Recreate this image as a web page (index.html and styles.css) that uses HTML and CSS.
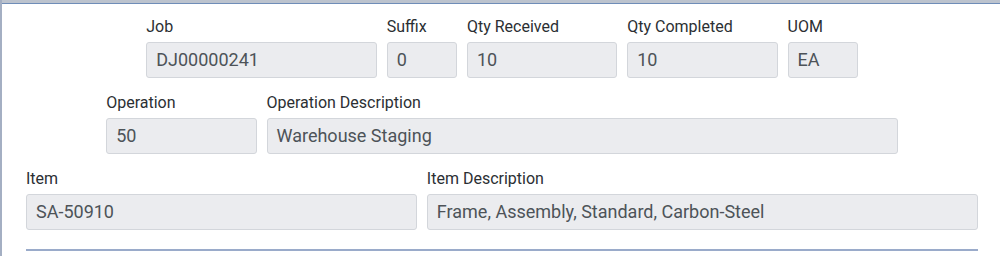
FILE: index.html
```html
<!DOCTYPE html>
<html>
<head>
<meta charset="utf-8">
<link rel="stylesheet" href="styles.css">
</head>
<body>
<div class="frame">
  <div class="frame-top"></div>
  <div class="panel">
    <div class="grid">
      <div class="field start-4 span-6"><label class="lbl">Job</label><div class="inp">DJ00000241</div></div>
      <div class="field span-2"><label class="lbl">Suffix</label><div class="inp">0</div></div>
      <div class="field span-4"><label class="lbl">Qty Received</label><div class="inp">10</div></div>
      <div class="field span-4"><label class="lbl">Qty Completed</label><div class="inp">10</div></div>
      <div class="field span-2"><label class="lbl">UOM</label><div class="inp">EA</div></div>
    </div>
    <div class="grid">
      <div class="field start-3 span-4"><label class="lbl">Operation</label><div class="inp">50</div></div>
      <div class="field span-16"><label class="lbl">Operation Description</label><div class="inp">Warehouse Staging</div></div>
    </div>
    <div class="grid">
      <div class="field span-10"><label class="lbl">Item</label><div class="inp">SA-50910</div></div>
      <div class="field span-14"><label class="lbl">Item Description</label><div class="inp">Frame, Assembly, Standard, Carbon-Steel</div></div>
    </div>
    <div class="rule"></div>
  </div>
</div>
</body>
</html>
```

FILE: styles.css
```css
html, body {
  margin: 0;
  padding: 0;
  background: #ffffff;
}
body {
  font-family: Roboto, "Liberation Sans", sans-serif;
  width: 1000px;
  height: 256px;
  overflow: hidden;
}
.frame {
  border-left: 2px solid #a4afc3;
  height: 256px;
  box-sizing: border-box;
}
.frame-top {
  height: 3px;
  background: #bcc3ce;
  border-bottom: 1px solid #6f8db8;
}
.panel {
  padding: 13px 22px 0 24px;
}
.grid {
  display: grid;
  grid-template-columns: repeat(24, 1fr);
  column-gap: 10px;
  margin-bottom: 15px;
}
.field {
  display: flex;
  flex-direction: column;
  min-width: 0;
}
.start-3.span-4 { grid-column: 3 / span 4; }
.start-4.span-6 { grid-column: 4 / span 6; }
.span-2 { grid-column-end: span 2; }
.span-4 { grid-column-end: span 4; }
.span-10 { grid-column-end: span 10; }
.span-14 { grid-column-end: span 14; }
.span-16 { grid-column-end: span 16; }
.lbl {
  font-size: 16px;
  font-weight: 400;
  line-height: 20px;
  color: #2b2f33;
  margin-bottom: 5px;
  white-space: nowrap;
}
.inp {
  height: 36px;
  box-sizing: border-box;
  background: #ebecef;
  border: 1px solid #d3d6db;
  border-radius: 3px;
  padding: 0 9px;
  font-size: 18px;
  line-height: 34px;
  color: #4d5358;
  white-space: nowrap;
  overflow: hidden;
}
.rule {
  height: 2px;
  background: #9aabca;
  margin-top: 19px;
}
```
